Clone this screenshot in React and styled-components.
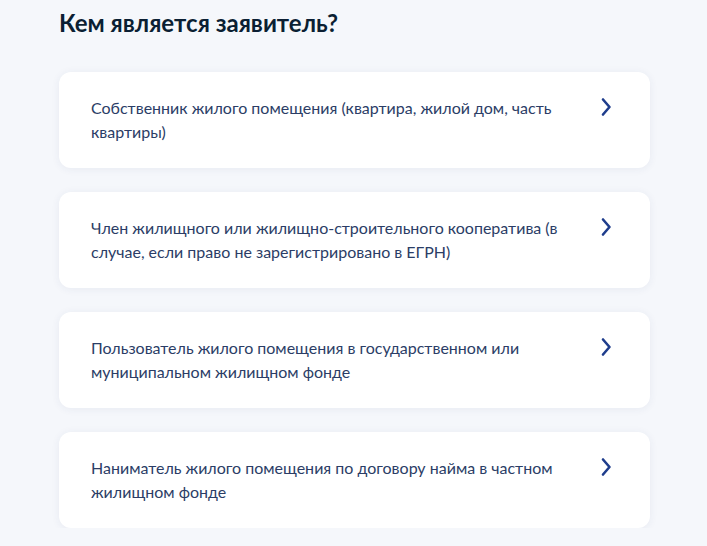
import React from 'react';
import styled, { createGlobalStyle } from 'styled-components';

const GlobalStyle = createGlobalStyle`
  html, body {
    margin: 0;
    padding: 0;
    background: #f5f7fb;
  }
  body {
    font-family: Lato, "Noto Sans", sans-serif;
  }
`;

const options = [
  'Собственник жилого помещения (квартира, жилой дом, часть квартиры)',
  'Член жилищного или жилищно-строительного кооператива (в случае, если право не зарегистрировано в ЕГРН)',
  'Пользователь жилого помещения в государственном или муниципальном жилищном фонде',
  'Наниматель жилого помещения по договору найма в частном жилищном фонде',
];

const Chevron = () => (
  <svg width="24" height="24" viewBox="0 0 24 24" fill="none">
    <path
      d="M9 4.5L15.5 12L9 19.5"
      stroke="#1f3d8c"
      strokeWidth="2.6"
      strokeLinecap="round"
      strokeLinejoin="round"
    />
  </svg>
);

const App = () => (
  <Page>
    <GlobalStyle />
    <Title>Кем является заявитель?</Title>
    <List>
      {options.map((text) => (
        <Card key={text}>
          <CardText>{text}</CardText>
          <Arrow>
            <Chevron />
          </Arrow>
        </Card>
      ))}
    </List>
  </Page>
);

const Page = styled.div`
  width: 591px;
  padding: 5px 0 0 59px;
`;

const Title = styled.h1`
  margin: 0 0 32px;
  font-size: 24px;
  line-height: 35px;
  font-weight: 700;
  color: #0b1f33;
`;

const List = styled.div`
  display: flex;
  flex-direction: column;
  gap: 24px;
`;

const Card = styled.div`
  display: flex;
  align-items: flex-start;
  gap: 24px;
  padding: 24px 32px;
  min-height: 48px;
  background: #ffffff;
  border-radius: 12px;
  box-shadow: 0 1px 8px rgba(44, 62, 110, 0.07);
  cursor: pointer;
`;

const CardText = styled.div`
  flex: 1;
  font-size: 16px;
  line-height: 24px;
  color: #2b3d66;
`;

const Arrow = styled.div`
  flex: 0 0 24px;
  height: 24px;
  margin-top: -1px;
`;

export default App;
